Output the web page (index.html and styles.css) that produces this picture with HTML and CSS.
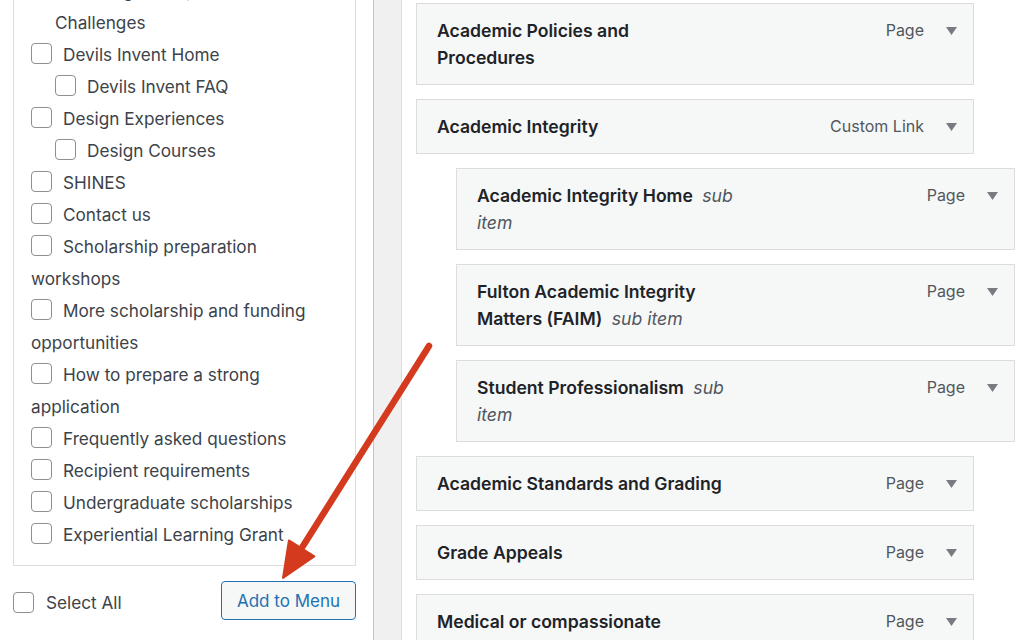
FILE: index.html
```html
<!DOCTYPE html>
<html lang="en">
<head>
<meta charset="utf-8">
<title>Menus</title>
<link rel="stylesheet" href="styles.css">
</head>
<body>
<div class="page">
  <aside class="left">
    <div class="checklist">
      <ul class="tree">
        <li><label><input type="checkbox">Devils Invent</label>
          <ul class="children">
            <li><label><input type="checkbox">Design Competitions and Challenges</label></li>
          </ul>
        </li>
        <li><label><input type="checkbox">Devils Invent Home</label>
          <ul class="children">
            <li><label><input type="checkbox">Devils Invent FAQ</label></li>
          </ul>
        </li>
        <li><label><input type="checkbox">Design Experiences</label>
          <ul class="children">
            <li><label><input type="checkbox">Design Courses</label></li>
          </ul>
        </li>
        <li><label><input type="checkbox">SHINES</label></li>
        <li><label><input type="checkbox">Contact us</label></li>
        <li><label><input type="checkbox">Scholarship preparation workshops</label></li>
        <li><label><input type="checkbox">More scholarship and funding opportunities</label></li>
        <li><label><input type="checkbox">How to prepare a strong application</label></li>
        <li><label><input type="checkbox">Frequently asked questions</label></li>
        <li><label><input type="checkbox">Recipient requirements</label></li>
        <li><label><input type="checkbox">Undergraduate scholarships</label></li>
        <li><label><input type="checkbox">Experiential Learning Grant</label></li>
      </ul>
    </div>
    <div class="actions">
      <label class="select-all"><input type="checkbox">Select All</label>
      <button class="add-btn" type="button">Add to Menu</button>
    </div>
    <svg class="grip" width="10" height="10" viewBox="0 0 10 10"><line x1="1" y1="9" x2="8" y2="2" stroke="#8c8f94" stroke-width="1"/></svg>
  </aside>
  <div class="gutter"></div>
  <main class="right">
    <ul class="menu">
      <li class="item"><div class="bar"><span class="title">Academic Advising</span><span class="type">Page</span><span class="toggle"><svg width="11" height="8" viewBox="0 0 11 8"><path d="M0 0H11L5.5 8Z" fill="#787c82"/></svg></span></div></li>
      <li class="item"><div class="bar"><span class="title">Academic Policies and Procedures</span><span class="type">Page</span><span class="toggle"><svg width="11" height="8" viewBox="0 0 11 8"><path d="M0 0H11L5.5 8Z" fill="#787c82"/></svg></span></div></li>
      <li class="item"><div class="bar"><span class="title">Academic Integrity</span><span class="type">Custom Link</span><span class="toggle"><svg width="11" height="8" viewBox="0 0 11 8"><path d="M0 0H11L5.5 8Z" fill="#787c82"/></svg></span></div></li>
      <li class="item sub"><div class="bar"><span class="title">Academic Integrity Home <em>sub item</em></span><span class="type">Page</span><span class="toggle"><svg width="11" height="8" viewBox="0 0 11 8"><path d="M0 0H11L5.5 8Z" fill="#787c82"/></svg></span></div></li>
      <li class="item sub"><div class="bar"><span class="title">Fulton Academic Integrity Matters (FAIM) <em>sub item</em></span><span class="type">Page</span><span class="toggle"><svg width="11" height="8" viewBox="0 0 11 8"><path d="M0 0H11L5.5 8Z" fill="#787c82"/></svg></span></div></li>
      <li class="item sub"><div class="bar"><span class="title">Student Professionalism <em>sub item</em></span><span class="type">Page</span><span class="toggle"><svg width="11" height="8" viewBox="0 0 11 8"><path d="M0 0H11L5.5 8Z" fill="#787c82"/></svg></span></div></li>
      <li class="item"><div class="bar"><span class="title">Academic Standards and Grading</span><span class="type">Page</span><span class="toggle"><svg width="11" height="8" viewBox="0 0 11 8"><path d="M0 0H11L5.5 8Z" fill="#787c82"/></svg></span></div></li>
      <li class="item"><div class="bar"><span class="title">Grade Appeals</span><span class="type">Page</span><span class="toggle"><svg width="11" height="8" viewBox="0 0 11 8"><path d="M0 0H11L5.5 8Z" fill="#787c82"/></svg></span></div></li>
      <li class="item"><div class="bar"><span class="title">Medical or compassionate</span><span class="type">Page</span><span class="toggle"><svg width="11" height="8" viewBox="0 0 11 8"><path d="M0 0H11L5.5 8Z" fill="#787c82"/></svg></span></div></li>
    </ul>
  </main>
</div>
<svg class="annotation" width="1024" height="640" viewBox="0 0 1024 640">
  <line x1="429" y1="346" x2="303" y2="546" stroke="#d43a1d" stroke-width="6.5" stroke-linecap="round"/>
  <path d="M283 578L288.9 540.4L314.3 556.4Z" fill="#d43a1d" stroke="#d43a1d" stroke-width="2" stroke-linejoin="round"/>
</svg>
</body>
</html>
```

FILE: styles.css
```css
* { box-sizing: border-box; }
html, body { margin: 0; padding: 0; height: 100%; overflow: hidden; }
body {
  font-family: Inter, "Noto Sans", sans-serif;
  font-size: 17.2px;
  color: #3c434a;
  background: #fff;
}
ul { list-style: none; margin: 0; padding: 0; }

.page {
  display: grid;
  grid-template-columns: 374px 28px 1fr;
  margin-top: -72px;
  min-height: calc(100vh + 72px);
}

/* left column */
.left {
  position: relative;
  background: #fff;
  border-right: 1px solid #c3c4c7;
  padding: 0 17px 0 13px;
}
.checklist {
  border: 1px solid #dcdcde;
  padding: 14px 17px;
}
.tree li { line-height: 32px; }
.tree label { display: block; }
.children { margin-left: 24px; }

input[type="checkbox"] {
  appearance: none;
  -webkit-appearance: none;
  width: 21px;
  height: 21px;
  border: 1.5px solid #8c8f94;
  border-radius: 4px;
  background: #fff;
  margin: 4px 11px 0 0;
  vertical-align: top;
}

.actions {
  display: flex;
  justify-content: space-between;
  align-items: center;
  margin-top: 15px;
}
.select-all {
  display: flex;
  align-items: center;
  padding-top: 4px;
}
.select-all input { margin: 0 12px 0 0; }
.add-btn {
  height: 39px;
  padding: 0 15px;
  border: 1px solid #2271b1;
  border-radius: 4px;
  background: #f6f7f7;
  color: #2271b1;
  font: inherit;
  font-size: 17px;
}
.grip {
  position: absolute;
  right: 0;
  bottom: 0;
}

/* gutter */
.gutter {
  background: #f0f0f1;
  border-right: 1px solid #dcdcde;
}

/* right column */
.right {
  padding: 6px 0 0 14px;
}
.menu .item { margin-bottom: 14px; }
.bar {
  display: flex;
  align-items: flex-start;
  width: 558px;
  background: #f6f7f7;
  border: 1px solid #dcdcde;
  padding: 13px 16px 13px 20px;
  line-height: 27px;
}
.sub { margin-left: 40px; }
.sub .bar { width: 559px; }
.title {
  flex: none;
  width: 289px;
  font-size: 17.6px;
  font-weight: 600;
  color: #1d2327;
}
.sub .title { width: 270px; }
.title em {
  font-style: italic;
  font-weight: 400;
  color: #50575e;
  margin-left: 5px;
}
.type {
  margin-left: auto;
  font-size: 16px;
  color: #50575e;
}
.toggle {
  display: flex;
  align-items: center;
  height: 27px;
  margin-left: 22px;
}

.annotation {
  position: fixed;
  top: 0;
  left: 0;
  pointer-events: none;
}
```
